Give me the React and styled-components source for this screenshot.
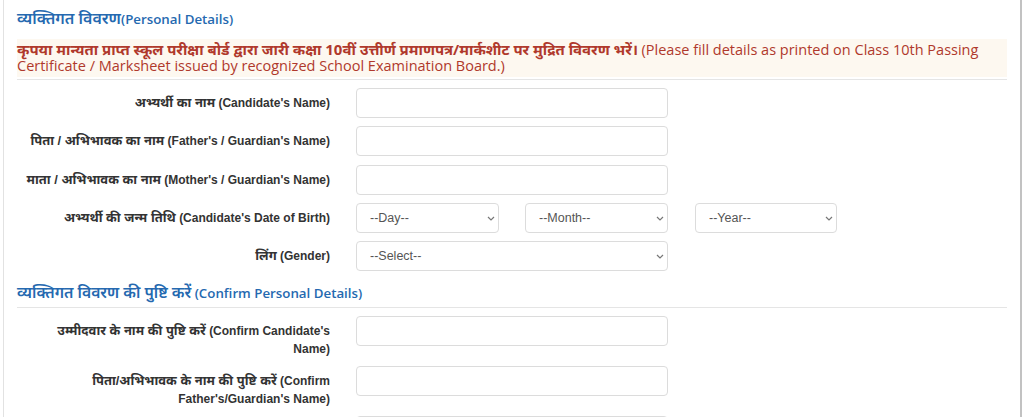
import styled, { createGlobalStyle } from 'styled-components';

const GlobalStyle = createGlobalStyle`
  body {
    margin: 0;
    background: #fff;
    font-family: "Liberation Sans", "Noto Sans Devanagari", "Noto Sans", Arial, sans-serif;
  }
`;

const Panel = styled.div`
  box-sizing: border-box;
  width: 1019px;
  margin-left: 3px;
  min-height: 417px;
  border-left: 1px solid #e2e2e2;
  border-right: 2px solid #c2c2c2;
  padding: 0 13px;
`;

// Devanagari runs a little larger than the latin text beside it
const Hi = styled.span`
  font-size: ${(p) => p.scale || 1.08}em;
`;

const Heading = styled.h4`
  margin: 0;
  padding-top: ${(p) => p.top || 0}px;
  font-family: "Open Sans", "Noto Sans", "Noto Sans Devanagari", sans-serif;
  font-size: 13.3px;
  font-weight: 600;
  line-height: 20px;
  color: #2569b0;
`;

const Notice = styled.p`
  margin: 10px 0 0;
  padding: 2px 0 3px;
  background: #fdf8f0;
  font-family: "Open Sans", "Noto Sans", "Noto Sans Devanagari", sans-serif;
  font-size: 14.5px;
  line-height: 16px;
  color: #b0392c;

  b {
    font-weight: 700;
  }
`;

const Rule = styled.hr`
  margin: ${(p) => p.top || 2}px 0 8px;
  border: 0;
  border-top: 1px solid #e5e5e5;
`;

const Row = styled.div`
  display: grid;
  grid-template-columns: 326px 169px 170px 156px;
  margin-bottom: ${(p) => (p.tall ? 8 : 8.3)}px;
  align-items: start;
`;

const Label = styled.label`
  padding: ${(p) => (p.multi ? 6 : 7)}px 13px 0 0;
  text-align: right;
  white-space: nowrap;
  font-size: 12px;
  font-weight: 700;
  line-height: ${(p) => (p.multi ? 18 : 16)}px;
  color: #333;
`;

const Field = styled.div`
  grid-column: span ${(p) => p.span || 1};
  padding: 0 13px;
  position: relative;
`;

const TextInput = styled.input`
  box-sizing: border-box;
  display: block;
  width: 312px;
  height: 30px;
  border: 1px solid #dcdcdc;
  border-radius: 4px;
  background: #fff;
`;

const Select = styled.select`
  box-sizing: border-box;
  display: block;
  width: ${(p) => p.w || 143}px;
  height: 30px;
  border: 1px solid #dcdcdc;
  border-radius: 4px;
  background: #fff;
  padding: 0 20px 0 13px;
  appearance: none;
  font-family: "Liberation Sans", Arial, sans-serif;
  font-size: 12.5px;
  color: #555;
`;

const Chevron = styled.svg`
  position: absolute;
  top: 13px;
  left: ${(p) => p.at}px;
  width: 8px;
  height: 5px;
  pointer-events: none;
`;

const Dropdown = ({ width = 143, placeholder }) => (
  <>
    <Select w={width} defaultValue="">
      <option value="">{placeholder}</option>
    </Select>
    <Chevron at={13 + width - 12} viewBox="0 0 8 5">
      <path d="M1 1l3 3 3-3" fill="none" stroke="#777" strokeWidth="1.2" />
    </Chevron>
  </>
);

const LabelText = ({ lines }) =>
  lines.map((line, i) => (
    <span key={i}>
      {i > 0 && <br />}
      {line.hi && <Hi>{line.hi}</Hi>}
      {line.hi && line.en ? ' ' : ''}
      {line.en}
    </span>
  ));

const personal = [
  [{ hi: 'अभ्यर्थी का नाम', en: "(Candidate's Name)" }],
  [{ hi: 'पिता / अभिभावक का नाम', en: "(Father's / Guardian's Name)" }],
  [{ hi: 'माता / अभिभावक का नाम', en: "(Mother's / Guardian's Name)" }],
];

const confirm = [
  [{ hi: 'उम्मीदवार के नाम की पुष्टि करें', en: "(Confirm Candidate's" }, { en: 'Name)' }],
  [{ hi: 'पिता/अभिभावक के नाम की पुष्टि करें', en: '(Confirm' }, { en: "Father's/Guardian's Name)" }],
  [{ hi: 'माता/अभिभावक के नाम की पुष्टि करें', en: '(Confirm' }, { en: "Mother's/Guardian's Name)" }],
];

export default function App() {
  return (
    <>
      <GlobalStyle />
      <Panel>
        <Heading top={8}>
          <Hi scale={1.2}>व्यक्तिगत विवरण</Hi>(Personal Details)
        </Heading>
        <Notice>
          <b>
            <Hi scale={1.03}>
              कृपया मान्यता प्राप्त स्कूल परीक्षा बोर्ड द्वारा जारी कक्षा 10वीं उत्तीर्ण प्रमाणपत्र/मार्कशीट पर मुद्रित विवरण भरें।
            </Hi>
          </b>{' '}
          (Please fill details as printed on Class 10th Passing Certificate / Marksheet issued by recognized School Examination Board.)
        </Notice>
        <Rule top={2} />
        {personal.map((lines, i) => (
          <Row key={i}>
            <Label>
              <LabelText lines={lines} />
            </Label>
            <Field span={2}>
              <TextInput type="text" />
            </Field>
          </Row>
        ))}
        <Row>
          <Label>
            <LabelText lines={[{ hi: 'अभ्यर्थी की जन्म तिथि', en: "(Candidate's Date of Birth)" }]} />
          </Label>
          <Field>
            <Dropdown placeholder="--Day--" />
          </Field>
          <Field>
            <Dropdown placeholder="--Month--" />
          </Field>
          <Field>
            <Dropdown width={142} placeholder="--Year--" />
          </Field>
        </Row>
        <Row>
          <Label>
            <LabelText lines={[{ hi: 'लिंग', en: '(Gender)' }]} />
          </Label>
          <Field span={2}>
            <Dropdown width={312} placeholder="--Select--" />
          </Field>
        </Row>
        <Heading top={3}>
          <Hi scale={1.18}>व्यक्तिगत विवरण की पुष्टि करें</Hi> (Confirm Personal Details)
        </Heading>
        <Rule top={4} />
        {confirm.map((lines, i) => (
          <Row key={i} tall>
            <Label multi>
              <LabelText lines={lines} />
            </Label>
            <Field span={2}>
              <TextInput type="text" />
            </Field>
          </Row>
        ))}
      </Panel>
    </>
  );
}
